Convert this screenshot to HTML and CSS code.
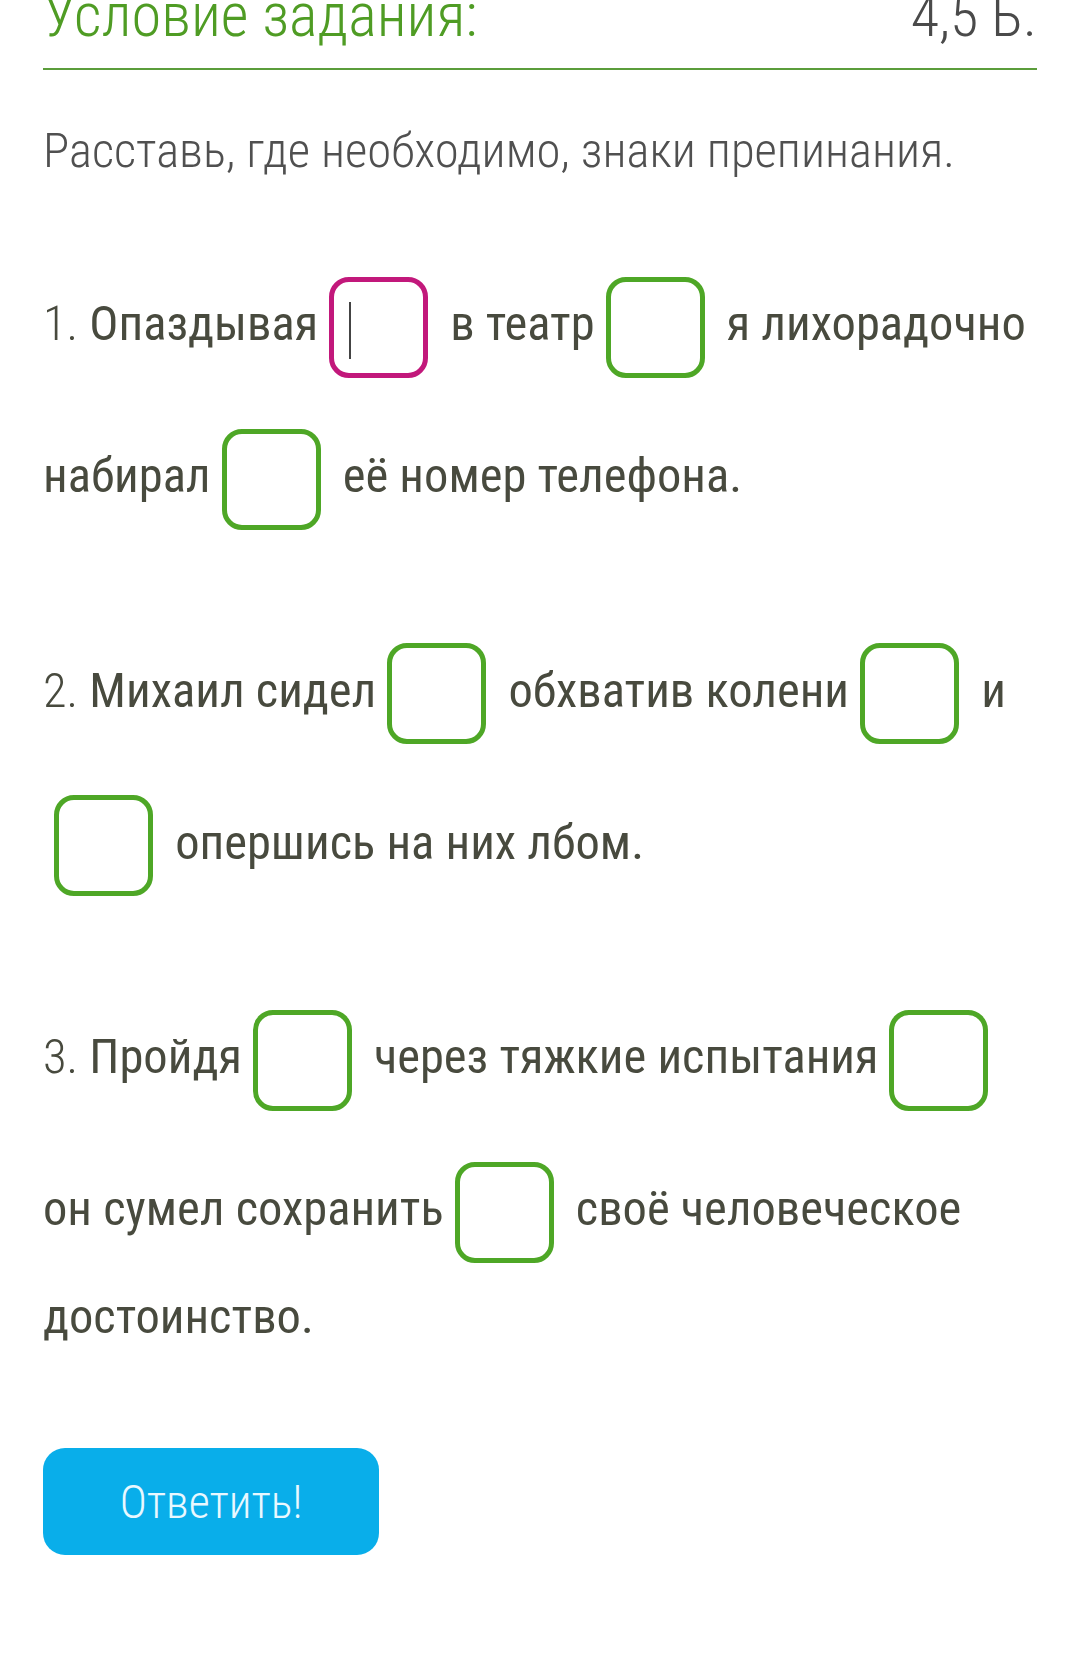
FILE: index.html
```html
<!DOCTYPE html>
<html lang="ru">
<head>
    <meta charset="UTF-8">
    <meta name="viewport" content="width=device-width, initial-scale=1.0">
    <title>Условие задания</title>
    <link rel="stylesheet" href="styles.css">
</head>
<body>
    <div class="task">
        <div class="task-head">
            <span class="task-title">Условие задания:</span>
            <span class="task-score">4,5 Б.</span>
        </div>

        <p class="task-hint">Расставь, где необходимо, знаки препинания.</p>

        <p class="sentence"><span class="num">1.</span> Опаздывая<span class="gap gap-active"></span> в театр<span class="gap"></span> я лихорадочно набирал<span class="gap"></span> её номер телефона.</p>

        <p class="sentence"><span class="num">2.</span> Михаил сидел<span class="gap"></span> обхватив колени<span class="gap"></span> и<span class="gap"></span> опершись на них лбом.</p>

        <p class="sentence"><span class="num">3.</span> Пройдя<span class="gap"></span> через тяжкие испытания<span class="gap"></span> он сумел сохранить<span class="gap"></span> своё человеческое достоинство.</p>

        <button class="answer-btn">Ответить!</button>
    </div>
</body>
</html>
```
FILE: styles.css
```css
body {
    margin: 0;
    background-color: #ffffff;
    font-family: "Roboto Condensed", Roboto, sans-serif;
    color: #484a3e; /* dark olive text */
}

.task {
    padding: 0 43px;
}

/* header, scrolled partly off the top */
.task-head {
    display: flex;
    justify-content: space-between;
    align-items: baseline;
    margin-top: -13px;
    padding-bottom: 23px;
    border-bottom: 2px solid #5b9d3b;
    line-height: 58px;
    font-weight: 300;
}
.task-title {
    font-size: 60.5px;
    color: #4f9c24;
}
.task-score {
    font-size: 58px;
    color: #4a4a4a;
}

.task-hint {
    margin: 48px 0 68px;
    font-size: 48.7px;
    line-height: 65px;
    font-weight: 300;
    color: #505050;
}

.sentence {
    margin: 0;
    font-size: 48.5px;
    line-height: 57px;
}
.sentence + .sentence {
    margin-top: 62.5px;
}
.num {
    font-weight: 300;
}

/* empty answer cell */
.gap {
    display: inline-block;
    box-sizing: border-box;
    width: 99px;
    height: 101px;
    margin: 25.5px 11px;
    vertical-align: middle;
    border: 5.5px solid #4ea726;
    border-radius: 20px;
    position: relative;
}
.gap-active {
    border-color: #c2187b;
}
.gap-active::after {
    content: "";
    position: absolute;
    left: 15px;
    top: 20px;
    width: 2px;
    height: 57px;
    background-color: #444;
}

.answer-btn {
    display: block;
    margin-top: 103px;
    width: 336px;
    height: 107px;
    border: none;
    border-radius: 22px;
    background-color: #09aeea;
    color: #e9f8ff;
    font-family: "Roboto Condensed", Roboto, sans-serif;
    font-size: 46px;
    font-weight: 300;
    cursor: pointer;
}
```
